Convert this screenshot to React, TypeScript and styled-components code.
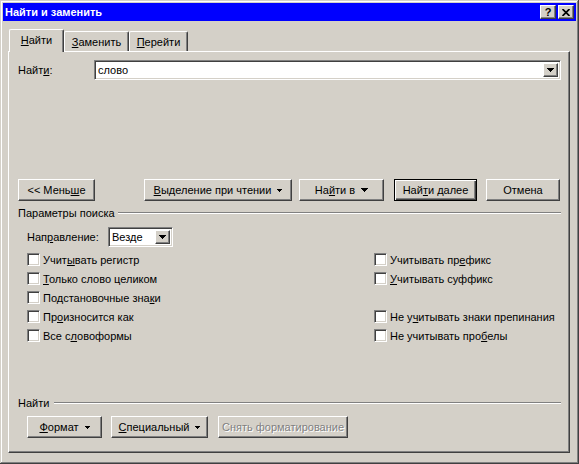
import React from "react";
import styled, { createGlobalStyle, css } from "styled-components";

const Global = createGlobalStyle`
  html, body { margin: 0; padding: 0; background: #d4d0c8; }
  body { font-family: "Liberation Sans", Arial, sans-serif; font-size: 11px; color: #000; }
  * { box-sizing: border-box; }
`;

const raised = css`
  border-top: 1px solid #fff;
  border-left: 1px solid #fff;
  border-right: 1px solid #404040;
  border-bottom: 1px solid #404040;
  box-shadow: inset -1px -1px #808080;
  background: #d4d0c8;
`;

const sunken = css`
  border-top: 1px solid #808080;
  border-left: 1px solid #808080;
  border-right: 1px solid #fff;
  border-bottom: 1px solid #fff;
  box-shadow: inset 1px 1px #404040, inset -1px -1px #d4d0c8;
  background: #fff;
`;

const Window = styled.div`
  width: 579px;
  height: 464px;
  background: #d4d0c8;
  padding: 3px;
  box-shadow: inset -1px -1px #404040, inset 1px 1px #d4d0c8,
    inset -2px -2px #808080, inset 2px 2px #fff;
  display: flex;
  flex-direction: column;
`;

const TitleBar = styled.div`
  height: 18px;
  background: #0000ff;
  display: flex;
  align-items: center;
  padding: 0 2px 0 2px;
`;

const TitleText = styled.div`
  flex: 1;
  color: #fff;
  font-weight: bold;
  font-size: 11px;
`;

const TitleButtons = styled.div`
  display: flex;
  gap: 2px;
`;

const CaptionButton = styled.div`
  ${raised};
  width: 16px;
  height: 14px;
  display: flex;
  align-items: center;
  justify-content: center;
  font-weight: bold;
  font-size: 11px;
  line-height: 1;
`;

const Body = styled.div`
  flex: 1;
  display: flex;
  flex-direction: column;
  padding: 8px 6px 8px 5px;
`;

const TabStrip = styled.div`
  display: flex;
  align-items: flex-end;
  height: 22px;
  padding-left: 1px;
`;

const Tab = styled.div<{ $w: number; $active?: boolean }>`
  width: ${(p) => p.$w}px;
  height: ${(p) => (p.$active ? 23 : 20)}px;
  border-top: 1px solid #fff;
  border-left: 1px solid #fff;
  border-right: 1px solid #404040;
  box-shadow: inset -1px 0 #808080;
  border-radius: 2px 2px 0 0;
  background: #d4d0c8;
  display: flex;
  align-items: center;
  justify-content: center;
  padding-top: ${(p) => (p.$active ? 0 : 1)}px;
  padding-bottom: ${(p) => (p.$active ? 3 : 0)}px;
  ${(p) =>
    p.$active &&
    css`
      position: relative;
      z-index: 1;
      margin-bottom: -1px;
    `}
`;

const Panel = styled.div`
  flex: 1;
  border-top: 1px solid #fff;
  border-left: 1px solid #fff;
  border-right: 1px solid #404040;
  border-bottom: 1px solid #404040;
  box-shadow: inset -1px -1px #808080;
  padding: 8px 8px 14px 9px;
  display: flex;
  flex-direction: column;
`;

const FindRow = styled.div`
  display: flex;
  align-items: center;
  height: 20px;
`;

const FieldLabel = styled.div<{ $w: number }>`
  width: ${(p) => p.$w}px;
  flex: none;
`;

const Combo = styled.div<{ $w?: number }>`
  ${sunken};
  ${(p) => (p.$w ? `width: ${p.$w}px; flex: none;` : "flex: 1;")}
  height: 20px;
  display: flex;
  align-items: stretch;
  padding: 2px 2px 2px 2px;
`;

const ComboText = styled.div`
  flex: 1;
  display: flex;
  align-items: center;
  padding-left: 1px;
`;

const ComboButton = styled.div`
  ${raised};
  width: 15px;
  flex: none;
  display: flex;
  align-items: center;
  justify-content: center;
`;

const ButtonRow = styled.div<{ $mt: number; $pl?: number }>`
  display: flex;
  margin-top: ${(p) => p.$mt}px;
  padding-left: ${(p) => p.$pl || 0}px;
`;

const Button = styled.div<{ $w: number; $ml?: number; $default?: boolean; $disabled?: boolean }>`
  width: ${(p) => p.$w}px;
  height: 22px;
  margin-left: ${(p) => p.$ml || 0}px;
  flex: none;
  display: flex;
  align-items: center;
  justify-content: center;
  gap: 6px;
  white-space: nowrap;
  ${(p) =>
    p.$default
      ? css`
          border: 1px solid #000;
          background: #d4d0c8;
          box-shadow: inset 1px 1px #fff, inset -1px -1px #404040, inset -2px -2px #808080;
        `
      : raised}
  ${(p) =>
    p.$disabled &&
    css`
      color: #808080;
      text-shadow: 1px 1px 0 #fff;
    `}
`;

const Arrow = ({ big }: { big?: boolean }) =>
  big ? (
    <svg width="7" height="4" viewBox="0 0 7 4" shapeRendering="crispEdges">
      <polygon points="0,0 7,0 3.5,4" fill="#000" />
    </svg>
  ) : (
    <svg width="5" height="3" viewBox="0 0 5 3" shapeRendering="crispEdges">
      <polygon points="0,0 5,0 2.5,3" fill="#000" />
    </svg>
  );

const SectionHeader = styled.div<{ $mt?: number }>`
  display: flex;
  align-items: center;
  height: 14px;
  margin-top: ${(p) => p.$mt || 0}px;
`;

const SectionLabel = styled.div<{ $w: number }>`
  width: ${(p) => p.$w}px;
  flex: none;
`;

const Rule = styled.div`
  flex: 1;
  height: 2px;
  border-top: 1px solid #808080;
  border-bottom: 1px solid #fff;
`;

const Params = styled.div`
  padding-left: 9px;
  display: flex;
  flex-direction: column;
`;

const DirRow = styled.div`
  display: flex;
  align-items: center;
  height: 20px;
  margin-top: 7px;
`;

const CheckGrid = styled.div`
  display: grid;
  grid-template-columns: 347px 1fr;
  grid-auto-rows: 19px;
  margin-top: 3px;
`;

const CheckItem = styled.label`
  display: flex;
  align-items: center;
  gap: 3px;
`;

const Box = styled.span`
  ${sunken};
  width: 13px;
  height: 13px;
  flex: none;
`;

const Bottom = styled.div`
  margin-top: auto;
  display: flex;
  flex-direction: column;
`;

const U = styled.span`
  text-decoration: underline;
  text-underline-offset: 1px;
`;

const Check = ({ children }: { children: React.ReactNode }) => (
  <CheckItem>
    <Box />
    <span>{children}</span>
  </CheckItem>
);

const Empty = styled.div``;

export default function App() {
  return (
    <>
      <Global />
      <Window>
        <TitleBar>
          <TitleText>Найти и заменить</TitleText>
          <TitleButtons>
            <CaptionButton>?</CaptionButton>
            <CaptionButton>
              <svg width="8" height="7" viewBox="0 0 8 7">
                <path d="M0.5 0 L7.5 7 M7.5 0 L0.5 7" stroke="#000" strokeWidth="1.7" />
              </svg>
            </CaptionButton>
          </TitleButtons>
        </TitleBar>
        <Body>
          <TabStrip>
            <Tab $w={55} $active>
              <span>
                <U>Н</U>айти
              </span>
            </Tab>
            <Tab $w={65}>
              <span>
                <U>З</U>аменить
              </span>
            </Tab>
            <Tab $w={59}>
              <span>
                <U>П</U>ерейти
              </span>
            </Tab>
          </TabStrip>
          <Panel>
            <FindRow>
              <FieldLabel $w={76}>
                Найт<U>и</U>:
              </FieldLabel>
              <Combo>
                <ComboText>слово</ComboText>
                <ComboButton>
                  <Arrow big />
                </ComboButton>
              </Combo>
            </FindRow>

            <ButtonRow $mt={99}>
              <Button $w={77}>
                <span>
                  &lt;&lt; Мень<U>ш</U>е
                </span>
              </Button>
              <Button $w={148} $ml={49}>
                <span>
                  <U>В</U>ыделение при чтении
                </span>
                <Arrow />
              </Button>
              <Button $w={85} $ml={7}>
                <span>
                  На<U>й</U>ти в
                </span>
                <Arrow big />
              </Button>
              <Button $w={83} $ml={10} $default>
                <span>
                  Най<U>т</U>и далее
                </span>
              </Button>
              <Button $w={74} $ml={9}>
                <span>Отмена</span>
              </Button>
            </ButtonRow>

            <SectionHeader $mt={5}>
              <SectionLabel $w={100}>Параметры поиска</SectionLabel>
              <Rule />
            </SectionHeader>

            <Params>
              <DirRow>
                <FieldLabel $w={81}>
                  Нап<U>р</U>авление:
                </FieldLabel>
                <Combo $w={65}>
                  <ComboText>Везде</ComboText>
                  <ComboButton>
                    <Arrow big />
                  </ComboButton>
                </Combo>
              </DirRow>
              <CheckGrid>
                <Check>
                  Учит<U>ы</U>вать регистр
                </Check>
                <Check>
                  Учитывать пр<U>е</U>фикс
                </Check>
                <Check>
                  <U>Т</U>олько слово целиком
                </Check>
                <Check>
                  <U>У</U>читывать суффикс
                </Check>
                <Check>
                  Подстановочные зна<U>к</U>и
                </Check>
                <Empty />
                <Check>
                  Пр<U>о</U>износится как
                </Check>
                <Check>
                  Не у<U>ч</U>итывать знаки препинания
                </Check>
                <Check>
                  Все с<U>л</U>овоформы
                </Check>
                <Check>
                  Не учитывать про<U>б</U>елы
                </Check>
              </CheckGrid>
            </Params>

            <Bottom>
              <SectionHeader>
                <SectionLabel $w={36}>Найти</SectionLabel>
                <Rule />
              </SectionHeader>
              <ButtonRow $mt={6} $pl={9}>
                <Button $w={75}>
                  <span>
                    <U>Ф</U>ормат
                  </span>
                  <Arrow />
                </Button>
                <Button $w={97} $ml={9}>
                  <span>
                    <U>С</U>пециальный
                  </span>
                  <Arrow />
                </Button>
                <Button $w={130} $ml={10} $disabled>
                  <span>Снять форматирование</span>
                </Button>
              </ButtonRow>
            </Bottom>
          </Panel>
        </Body>
      </Window>
    </>
  );
}
